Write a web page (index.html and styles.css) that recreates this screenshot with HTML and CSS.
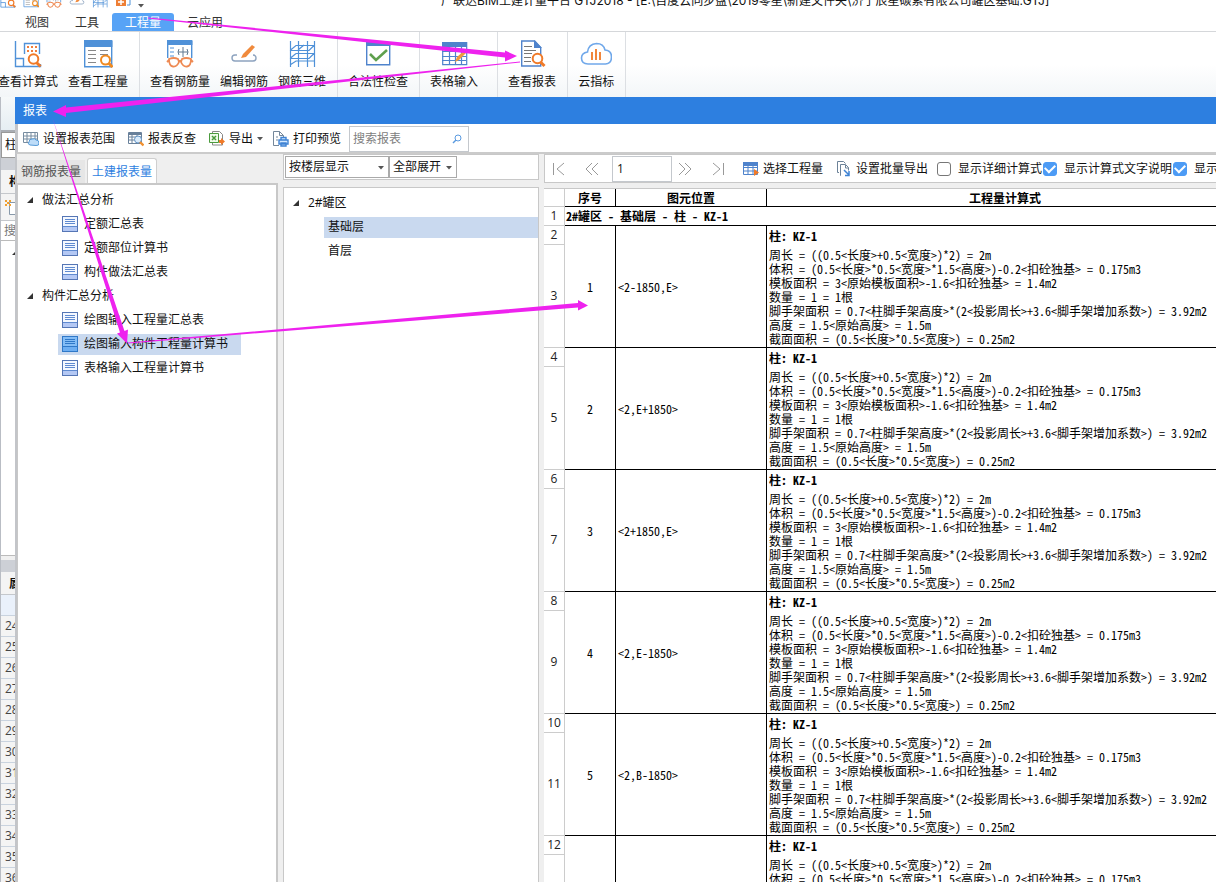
FILE: index.html
```html
<!DOCTYPE html>
<html lang="zh-CN">
<head>
<meta charset="utf-8">
<title>广联达BIM土建计量平台 GTJ2018</title>
<link rel="stylesheet" href="styles.css">
</head>
<body>
<svg class="defs" aria-hidden="true">
  <symbol id="doc" viewBox="0 0 16 16"><rect x=".5" y=".5" width="15" height="15" fill="#f4f8ff" stroke="#5576b5"/><path d="M1 11h14v4H1z" fill="#b4c8f4"/><path d="M3 3.5h10M3 5.5h10M3 7.5h10M1 10.5h14" stroke="#5f8ad0" fill="none"/></symbol>
  <symbol id="doc-on" viewBox="0 0 16 16"><rect x=".5" y=".5" width="15" height="15" fill="#84bdf6" stroke="#2f78c8"/><path d="M1 11h14v4H1z" fill="#6daef2"/><path d="M3 3.5h10M3 5.5h10M3 7.5h10M1 10.5h14" stroke="#2f78c8" fill="none"/></symbol>
  <symbol id="caret" viewBox="0 0 6 4"><path d="M0 0h6L3 3.500z" fill="#555"/></symbol>
  <symbol id="open" viewBox="0 0 8 8"><path d="M7 1v6H1z" fill="#333"/></symbol>
  <symbol id="calc" viewBox="0 0 28 28"><g fill="none" stroke="#4f91d8" stroke-width="1.400"><path d="M1.500 1v25.500h25V24M1.500 18.500h8v8M10.500 14V3.500h15V14"/></g><path d="M13 7h2m2 0h2m2 0h2m-10 4h2m2 0h2m2 0h2" stroke="#ef7d3c" stroke-width="2"/><circle cx="19.500" cy="19" r="4.800" fill="#fff" stroke="#f07a28" stroke-width="2"/><path d="M22.500 22.500l4 4" stroke="#f07a28" stroke-width="3"/></symbol>
  <symbol id="sheet-find" viewBox="0 0 30 28"><path d="M1.700 1.700h27v25h-27z" fill="#fff" stroke="#4f91d8" stroke-width="1.400"/><path d="M1 0h28.400v7H1z" fill="#4f91d8"/><path d="M5 10.500h8m-8 4h8m-8 4h8m-8 4h8m4-12h8m-8 4h8" stroke="#888"/><circle cx="22.500" cy="20" r="4.500" fill="#fff" stroke="#f08a20" stroke-width="2"/><path d="M25.500 23l4 4" stroke="#f08a20" stroke-width="3"/></symbol>
  <symbol id="glasses" viewBox="0 0 28 28"><path d="M1.700 18V1.700h24V18" fill="#fff" stroke="#4f91d8" stroke-width="1.400"/><path d="M1 0h25.400v5H1z" fill="#4f91d8"/><path d="M4 8h4m-4 4h4m-4 4h4" stroke="#4f91d8"/><path d="M17 7v10m-5-5h10M13 9q-2 3 0 6m8-6q2 3 0 6" stroke="#607890" fill="none"/><path d="M3 19q5-2 9 0l1 3q-2 5-6 4.500Q3 26 3 19zm22 0q-5-2-9 0l-1 3q2 5 6 4.500 4-.5 4-7.500zM12 21h4M3 20l-2 2m24-2l2 2" fill="#fff" stroke="#ee8a53" stroke-width="1.800"/></symbol>
  <symbol id="edit" viewBox="0 0 28 28"><path d="M7 15H5q-3 0-3 3t3 3h18q3 0 3-3t-3-3" fill="none" stroke="#8da3bf" stroke-width="1.400"/><path d="M11 18l2-4L22 5l3 2-9 10z" fill="#f08a3c"/></symbol>
  <symbol id="mesh" viewBox="0 0 28 28"><path d="M2.500 1v26m8-26v26m9-26v26m7-26v26M2 10.500l6-5h19M2 18.500h19l5-5M2 25l6-4h18M2 10.500h19l5-5M8 13.500h18M2 18.500l6-5M10 10l6-5" fill="none" stroke="#4f91d8" stroke-width="1.200"/></symbol>
  <symbol id="check" viewBox="0 0 28 28"><path d="M2.700 2.700h23v22h-23z" fill="#fff" stroke="#4f83cc" stroke-width="1.400"/><path d="M2 2h24.400v4H2z" fill="#4f83cc"/><path d="M6 14l6 6L23 10" fill="none" stroke="#5fa04e" stroke-width="2.600"/></symbol>
  <symbol id="grid-edit" viewBox="0 0 28 28"><path d="M2.700 2.700h24v22h-24zM2 11.500h24m-24 5h24m-24 4h24M9.500 7v18m6-18v18m6-18v18" fill="#fff" stroke="#4f83cc" stroke-width="1.200"/><path d="M2 2h25v5H2z" fill="#4f83cc"/><path d="M15 22l2-5 9-8 2 2-9 9z" fill="#f09a3c"/></symbol>
  <symbol id="report" viewBox="0 0 28 28"><path d="M3.700 1h13l6 6.500V26h-19z" fill="#fff" stroke="#4f83cc" stroke-width="1.400"/><path d="M16 0v8h8z" fill="#4f83cc"/><path d="M6 6.500h8m-8 4h12m-12 3h8m-8 4h7m-7 4h7" stroke="#777"/><circle cx="19.500" cy="18.500" r="4.800" fill="#fff" stroke="#f07a28" stroke-width="2"/><path d="M22.500 22l4 4" stroke="#f07a28" stroke-width="3"/></symbol>
  <symbol id="cloud" viewBox="0 0 32 28"><path d="M8 24q-6.500 0-6.500-6 0-5 6-6 1-8 9-8.500 7 0 8.500 6.500 6.500.5 6.500 7t-6 7z" fill="#fff" stroke="#70a8ea" stroke-width="1.600"/><path d="M12 12v8m4-11v11m4-8v8" stroke="#f07a28" stroke-width="1.800"/></symbol>
  <symbol id="range" viewBox="0 0 16 16"><path d="M.5 1.500h14v10H.5zM0 5h14M0 8h14M4 2v9m4-9v9m4-9v9" fill="none" stroke="#778ca0"/><path d="M7 14q-3-1-1-3 0-3 3-3 3-1 4 1 3 0 3 3 0 3-3 2.500z" fill="#bddcf8" stroke="#579bd8"/></symbol>
  <symbol id="recheck" viewBox="0 0 16 16"><path d="M.5 1.500h13v11H.5zM0 6h13M0 9h8M4 2v10m5-10v5" fill="none" stroke="#68809a"/><path d="M1 2h12v2H1z" fill="#68809a"/><circle cx="10" cy="8.500" r="3.500" fill="#d9ebfb" stroke="#6595c5"/><path d="M12 11l3.500 3.500" stroke="#f09030" stroke-width="2.400"/></symbol>
  <symbol id="export" viewBox="0 0 16 16"><path d="M3.500 12V.5h7l3 3V14h-10v-2" fill="#fff" stroke="#888"/><path d="M.5 2.500h9v9h-9z" fill="#effbe9" stroke="#4b9b3d"/><path d="M3 5l4 4m0-4L3 9" stroke="#4b9b3d" stroke-width="1.500"/><path d="M10 9h2V7l4 3.500-4 3.500v-2h-2z" fill="#f07a28"/></symbol>
  <symbol id="print" viewBox="0 0 16 16"><path d="M6 14.500H.5V.5h6l4 4v2M6.500.5v4h4M3 6h2M3 9h2" fill="none" stroke="#74879a"/><path d="M6 9h9v4H6zM8 9V6.500h5V9M8 12h5v3H8z" fill="#d3e8ff" stroke="#3f83d4" stroke-width="1.400"/></symbol>
  <symbol id="grid-pick" viewBox="0 0 16 16"><path d="M.5 1.500h14v12H.5zM0 6.500h14M0 10h14M5 5v8m5-8v8" fill="#fff" stroke="#4f83cc"/><path d="M0 1h15v4H0z" fill="#4f83cc"/><path d="M11 8l5 3.500-5 3.500z" fill="#f07a28"/></symbol>
  <symbol id="batch" viewBox="0 0 16 16"><path d="M3 11.500H1.500V.5h6l2 2M5 14.500h-.5v-11h5l3 3v3M9.500 4v3h3" fill="none" stroke="#6c8298"/><path d="M8 9l5 5m0-4v4.500H9" fill="none" stroke="#3f83d4" stroke-width="1.500"/></symbol>
</svg>

<header class="app-head">
  <div class="quick">
    <div class="quick-icons">
      <svg><use href="#calc"/></svg><svg><use href="#sheet-find"/></svg><svg><use href="#glasses"/></svg><svg><use href="#edit"/></svg><svg><use href="#mesh"/></svg>
      <svg viewBox="0 0 16 16"><path d="M1 2h10v12H1z" fill="#ee7f35"/><path d="M3 10h6m-3-3v6" stroke="#fff" stroke-width="1.500"/><path d="M12 2h3v11h-3" stroke="#4f91d8" fill="none"/></svg>
      <svg class="caret"><use href="#caret"/></svg>
    </div>
    <div class="app-title">广联达BIM土建计量平台 GTJ2018 - [E:\百度云同步盘\2019零星\新建文件夹\济宁辰星碳素有限公司罐区基础.GTJ]</div>
  </div>
  <nav class="tabs">
    <button>视图</button><button>工具</button><button class="on">工程量</button><button>云应用</button>
  </nav>
</header>

<section class="ribbon">
  <div class="group first">
    <button><svg><use href="#calc"/></svg>查看计算式</button>
    <button><svg class="mid"><use href="#sheet-find"/></svg>查看工程量</button>
  </div>
  <div class="group">
    <button><svg><use href="#glasses"/></svg>查看钢筋量</button>
    <button><svg><use href="#edit"/></svg>编辑钢筋</button>
    <button><svg><use href="#mesh"/></svg>钢筋三维</button>
  </div>
  <div class="group"><button><svg><use href="#check"/></svg>合法性检查</button></div>
  <div class="group wide"><button><svg><use href="#grid-edit"/></svg>表格输入</button></div>
  <div class="group"><button><svg><use href="#report"/></svg>查看报表</button></div>
  <div class="group"><button><svg class="cloud"><use href="#cloud"/></svg>云指标</button></div>
</section>

<main class="work">
  <aside class="behind">
    <div class="b-gap"></div>
    <div class="b-type">柱</div>
    <div class="b-bar"></div>
    <div class="b-head">构</div>
    <div class="b-tool"><svg viewBox="0 0 16 16"><path d="M4.500 3.500h11v12h-11z" fill="#fff" stroke="#8899aa"/><path d="M0 1h2v2h2V1h2v2H4v2h2v2H4V5H2v2H0V5h2V3H0z" fill="#f0a030"/></svg></div>
    <div class="b-search">搜</div>
    <div class="b-tree"><svg class="tri"><use href="#open"/></svg></div>
    <div class="b-split"></div>
    <div class="b-head prop">属</div>
    <div class="b-cols"></div>
    <ol class="b-rows"><li>24</li><li>25</li><li>26</li><li>27</li><li>28</li><li>29</li><li>30</li><li>31</li><li>32</li><li>33</li><li>34</li><li>35</li><li>36</li></ol>
  </aside>

  <section class="dialog">
    <h1>报表</h1>
    <div class="toolbar">
      <button><svg><use href="#range"/></svg>设置报表范围</button>
      <button><svg><use href="#recheck"/></svg>报表反查</button>
      <button><svg><use href="#export"/></svg>导出<svg class="caret"><use href="#caret"/></svg></button>
      <button><svg><use href="#print"/></svg>打印预览</button>
      <div class="search">
        <input type="text" placeholder="搜索报表" aria-label="搜索报表">
        <svg viewBox="0 0 10 10"><circle cx="6" cy="4" r="3" fill="none" stroke="#5a9ae0"/><path d="M4 6L1 9" stroke="#5a9ae0" stroke-width="1.500"/></svg>
      </div>
    </div>
    <div class="panes">
      <div class="reports">
        <div class="rtabs"><button>钢筋报表量</button><button class="on">土建报表量</button></div>
        <ul class="tree">
          <li class="top"><svg class="tri"><use href="#open"/></svg>做法汇总分析</li>
          <li><span><svg><use href="#doc"/></svg>定额汇总表</span></li>
          <li><span><svg><use href="#doc"/></svg>定额部位计算书</span></li>
          <li><span><svg><use href="#doc"/></svg>构件做法汇总表</span></li>
          <li class="top"><svg class="tri"><use href="#open"/></svg>构件汇总分析</li>
          <li><span><svg><use href="#doc"/></svg>绘图输入工程量汇总表</span></li>
          <li><span class="sel"><svg><use href="#doc-on"/></svg>绘图输入构件工程量计算书</span></li>
          <li><span><svg><use href="#doc"/></svg>表格输入工程量计算书</span></li>
        </ul>
      </div>

      <div class="floors">
        <div class="filters">
          <div class="pick floor"><select aria-label="显示方式"><option>按楼层显示</option></select><svg class="caret"><use href="#caret"/></svg></div>
          <div class="pick"><select aria-label="展开"><option>全部展开</option></select><svg class="caret"><use href="#caret"/></svg></div>
        </div>
        <ul class="tree">
          <li class="top"><svg class="tri"><use href="#open"/></svg>2#罐区</li>
          <li><span class="sel">基础层</span></li>
          <li><span>首层</span></li>
        </ul>
      </div>

      <div class="view">
        <div class="viewbar">
          <div class="pager">
            <button aria-label="首页"><svg viewBox="0 0 14 14"><path d="M1.500 1v12M12 1L5 7l7 6"/></svg></button>
            <button aria-label="上一页"><svg viewBox="0 0 14 14"><path d="M7 1L1 7l6 6M13 1L7 7l6 6"/></svg></button>
            <input type="text" value="1" aria-label="页码">
            <button aria-label="下一页"><svg viewBox="0 0 14 14"><path d="M1 1l6 6-6 6M7 1l6 6-6 6"/></svg></button>
            <button aria-label="末页"><svg viewBox="0 0 14 14"><path d="M12.500 1v12M2 1l7 6-7 6"/></svg></button>
          </div>
          <button class="cmd"><svg><use href="#grid-pick"/></svg>选择工程量</button>
          <button class="cmd"><svg><use href="#batch"/></svg>设置批量导出</button>
          <div class="checks">
            <label><input type="checkbox">显示详细计算式</label>
            <label><input type="checkbox" checked>显示计算式文字说明</label>
            <label><input type="checkbox" checked>显示</label>
          </div>
        </div>
        <div class="sheet">
          <table>
            <colgroup><col class="c-row"><col class="c-no"><col class="c-pos"><col class="c-exp"></colgroup>
            <thead><tr><th class="n"></th><th>序号</th><th>图元位置</th><th>工程量计算式</th></tr></thead>
            <tbody>
              <tr><th class="n">1</th><td colspan="3" class="title">2#罐区 - 基础层 - 柱 - KZ-1</td></tr>

              <tr><th class="n">2</th><td rowspan="2" class="no">1</td><td rowspan="2">&lt;2-1850,E&gt;</td><td class="name">柱: KZ-1</td></tr>
              <tr><th class="n">3</th><td class="exp">周长 = ((0.5&lt;长度&gt;+0.5&lt;宽度&gt;)*2) = 2m<br>体积 = (0.5&lt;长度&gt;*0.5&lt;宽度&gt;*1.5&lt;高度&gt;)-0.2&lt;扣砼独基&gt; = 0.175m3<br>模板面积 = 3&lt;原始模板面积&gt;-1.6&lt;扣砼独基&gt; = 1.4m2<br>数量 = 1 = 1根<br>脚手架面积 = 0.7&lt;柱脚手架高度&gt;*(2&lt;投影周长&gt;+3.6&lt;脚手架增加系数&gt;) = 3.92m2<br>高度 = 1.5&lt;原始高度&gt; = 1.5m<br>截面面积 = (0.5&lt;长度&gt;*0.5&lt;宽度&gt;) = 0.25m2</td></tr>

              <tr><th class="n">4</th><td rowspan="2" class="no">2</td><td rowspan="2">&lt;2,E+1850&gt;</td><td class="name">柱: KZ-1</td></tr>
              <tr><th class="n">5</th><td class="exp">周长 = ((0.5&lt;长度&gt;+0.5&lt;宽度&gt;)*2) = 2m<br>体积 = (0.5&lt;长度&gt;*0.5&lt;宽度&gt;*1.5&lt;高度&gt;)-0.2&lt;扣砼独基&gt; = 0.175m3<br>模板面积 = 3&lt;原始模板面积&gt;-1.6&lt;扣砼独基&gt; = 1.4m2<br>数量 = 1 = 1根<br>脚手架面积 = 0.7&lt;柱脚手架高度&gt;*(2&lt;投影周长&gt;+3.6&lt;脚手架增加系数&gt;) = 3.92m2<br>高度 = 1.5&lt;原始高度&gt; = 1.5m<br>截面面积 = (0.5&lt;长度&gt;*0.5&lt;宽度&gt;) = 0.25m2</td></tr>

              <tr><th class="n">6</th><td rowspan="2" class="no">3</td><td rowspan="2">&lt;2+1850,E&gt;</td><td class="name">柱: KZ-1</td></tr>
              <tr><th class="n">7</th><td class="exp">周长 = ((0.5&lt;长度&gt;+0.5&lt;宽度&gt;)*2) = 2m<br>体积 = (0.5&lt;长度&gt;*0.5&lt;宽度&gt;*1.5&lt;高度&gt;)-0.2&lt;扣砼独基&gt; = 0.175m3<br>模板面积 = 3&lt;原始模板面积&gt;-1.6&lt;扣砼独基&gt; = 1.4m2<br>数量 = 1 = 1根<br>脚手架面积 = 0.7&lt;柱脚手架高度&gt;*(2&lt;投影周长&gt;+3.6&lt;脚手架增加系数&gt;) = 3.92m2<br>高度 = 1.5&lt;原始高度&gt; = 1.5m<br>截面面积 = (0.5&lt;长度&gt;*0.5&lt;宽度&gt;) = 0.25m2</td></tr>

              <tr><th class="n">8</th><td rowspan="2" class="no">4</td><td rowspan="2">&lt;2,E-1850&gt;</td><td class="name">柱: KZ-1</td></tr>
              <tr><th class="n">9</th><td class="exp">周长 = ((0.5&lt;长度&gt;+0.5&lt;宽度&gt;)*2) = 2m<br>体积 = (0.5&lt;长度&gt;*0.5&lt;宽度&gt;*1.5&lt;高度&gt;)-0.2&lt;扣砼独基&gt; = 0.175m3<br>模板面积 = 3&lt;原始模板面积&gt;-1.6&lt;扣砼独基&gt; = 1.4m2<br>数量 = 1 = 1根<br>脚手架面积 = 0.7&lt;柱脚手架高度&gt;*(2&lt;投影周长&gt;+3.6&lt;脚手架增加系数&gt;) = 3.92m2<br>高度 = 1.5&lt;原始高度&gt; = 1.5m<br>截面面积 = (0.5&lt;长度&gt;*0.5&lt;宽度&gt;) = 0.25m2</td></tr>

              <tr><th class="n">10</th><td rowspan="2" class="no">5</td><td rowspan="2">&lt;2,B-1850&gt;</td><td class="name">柱: KZ-1</td></tr>
              <tr><th class="n">11</th><td class="exp">周长 = ((0.5&lt;长度&gt;+0.5&lt;宽度&gt;)*2) = 2m<br>体积 = (0.5&lt;长度&gt;*0.5&lt;宽度&gt;*1.5&lt;高度&gt;)-0.2&lt;扣砼独基&gt; = 0.175m3<br>模板面积 = 3&lt;原始模板面积&gt;-1.6&lt;扣砼独基&gt; = 1.4m2<br>数量 = 1 = 1根<br>脚手架面积 = 0.7&lt;柱脚手架高度&gt;*(2&lt;投影周长&gt;+3.6&lt;脚手架增加系数&gt;) = 3.92m2<br>高度 = 1.5&lt;原始高度&gt; = 1.5m<br>截面面积 = (0.5&lt;长度&gt;*0.5&lt;宽度&gt;) = 0.25m2</td></tr>

              <tr><th class="n">12</th><td rowspan="2" class="no"></td><td rowspan="2"></td><td class="name">柱: KZ-1</td></tr>
              <tr><th class="n"></th><td class="exp">周长 = ((0.5&lt;长度&gt;+0.5&lt;宽度&gt;)*2) = 2m<br>体积 = (0.5&lt;长度&gt;*0.5&lt;宽度&gt;*1.5&lt;高度&gt;)-0.2&lt;扣砼独基&gt; = 0.175m3</td></tr>
            </tbody>
          </table>
        </div>
      </div>
    </div>
  </section>
</main>

<svg class="arrows" viewBox="0 0 1216 882" aria-hidden="true">
  <path d="M148 17.500L505 52.500V50.500L517 56 505 61.500V57.500L148 18.500z"/>
  <path d="M520 61.500L66 107.500V105L53 111.500 66 117V113L520 62.500z"/>
  <path d="M52 116.500L124.500 331 128 329.500 127 343.500 117 333.500 120 332.500z"/>
  <path d="M128 342.500L578 303V300L588 305.500 578 310.500V307.500L128 343.500z"/>
</svg>
</body>
</html>
```
FILE: styles.css
```css
* { box-sizing: border-box; }
body {
  margin: 0; height: 100vh; overflow: hidden; position: relative;
  display: flex; flex-direction: column; background: #fff; color: #111;
  font: 12px/18px "Open Sans", "Noto Sans CJK SC", sans-serif;
}
button, input, select { font: inherit; color: inherit; margin: 0; padding: 0; border: 0; background: none; border-radius: 0; }
button { white-space: nowrap; }
ul, ol { list-style: none; margin: 0; padding: 0; }
svg { flex: none; display: block; }
.defs { display: none; }
.caret { width: 6px; height: 4px; }
.tri { width: 8px; height: 8px; }

.quick { height: 13px; overflow: hidden; display: flex; align-items: flex-end; }
.quick-icons { display: flex; align-items: flex-end; gap: 7px; width: 441px; padding-bottom: 5px; }
.quick-icons svg { width: 16px; height: 16px; }
.quick-icons .caret { width: 6px; height: 4px; }
.app-title { white-space: nowrap; padding-bottom: 3px; font-family: Inter, "Noto Sans CJK SC", sans-serif; }
.tabs { display: flex; padding-left: 12px; border-bottom: 1px solid #d5d7da; }
.tabs button { height: 18px; padding: 2px 13px 0; line-height: 16px; color: #333; }
.tabs .on { background: #57a3f6; color: #fff; border-radius: 3px 3px 0 0; }

.ribbon { display: flex; height: 65px; flex: none; background: linear-gradient(#fff 50%, #f3f6f8); }
.group { display: flex; gap: 10px; padding: 8px 11px 0 10px; border-right: 1px solid #dcdfe3; }
.first { padding-left: 0; margin-left: -2px; }
.group.wide { padding-right: 19px; }
.group button { display: flex; flex-direction: column; align-items: center; gap: 5px; }
.group svg { width: 28px; height: 28px; }
.group svg.mid { width: 30px; }
.group svg.cloud { width: 32px; }

.work { flex: 1; min-height: 0; display: grid; grid-template-columns: 15px 1fr; }
.behind { overflow: hidden; white-space: nowrap; display: flex; flex-direction: column; background: #f4f4f4; border-left: 1px solid #b9bdc4; }
.behind > * { flex: none; }
.b-gap { height: 35px; background: linear-gradient(#f6f9fa, #e6eef3); border-bottom: 2px solid #a9adb3; }
.b-type { height: 26px; padding-left: 3px; line-height: 24px; background: #fff; border: 1px solid #999; border-right: 0; }
.b-bar { height: 12px; background: #cdd0d6; }
.b-head { height: 24px; padding-left: 8px; line-height: 24px; font-weight: bold; border-bottom: 1px solid #c5c8cc; }
.b-tool { height: 27px; padding: 5px 0 0 4px; border-bottom: 1px solid #c5c8cc; }
.b-tool svg { width: 16px; height: 16px; }
.b-search { height: 20px; line-height: 20px; padding-left: 3px; background: #fff; color: #777; border-bottom: 1px solid #bbb; }
.b-tree { height: 315px; padding: 7px 0 0 10px; background: #fff; border-bottom: 1px solid #bbb; }
.b-split { height: 16px; border-top: 4px solid #f0f0f0; background: #cdd0d6; }
.b-head.prop { height: 23px; }
.b-cols { height: 20px; background: #eaf1fb; }
.b-rows li { height: 21px; line-height: 20px; padding-left: 4px; border-top: 1px solid #c9d3df; color: #444; }

.dialog { min-width: 0; min-height: 0; display: flex; flex-direction: column; background: #efefef; }
.dialog h1 { margin: 0; height: 27px; flex: none; padding-left: 8px; font-size: 12px; line-height: 27px; font-weight: normal; color: #fff; background: #2d7fe0; }
.toolbar { height: 30px; flex: none; display: flex; align-items: center; gap: 13px; padding: 1px 0 0 5px; background: #fff; border-left: 3px solid #c3c5c9; border-bottom: 2px solid #cbcbcb; }
.toolbar button { display: flex; align-items: center; gap: 4px; }
.toolbar button svg { width: 16px; height: 16px; }
.toolbar button svg.caret { width: 6px; height: 4px; margin-right: -3px; }
.search { display: flex; align-items: center; width: 120px; height: 26px; margin-left: -5px; padding: 0 6px 0 3px; border: 1px solid #c4c8cd; }
.search input { flex: 1; min-width: 0; }
.search input::placeholder { color: #808080; opacity: 1; }
.search svg { width: 10px; height: 10px; }

.panes { flex: 1; min-height: 0; display: grid; grid-template-columns: 263px 256px 1fr; column-gap: 5px; }
.tree { flex: 1; background: #fff; border: 2px solid #c8c8c8; border-bottom: 0; }
.tree li { height: 24px; display: flex; align-items: center; }
.tree span { display: flex; align-items: center; height: 21px; }

.reports { display: flex; flex-direction: column; border-left: 2px solid #c3c5c9; }
.rtabs { display: flex; align-items: flex-end; height: 29px; padding: 3px 0 0; }
.rtabs button { height: 23px; width: 68px; color: #555; background: #e6e6e6; }
.rtabs .on { height: 26px; width: 70px; margin: 0 0 -1px 2px; color: #2f7fdf; background: #fff; border: 1px solid #cfcfcf; border-bottom: 0; border-radius: 3px 3px 0 0; }
.reports .tree { padding: 3px 0 0 8px; border-left-width: 1px; }
.reports .top { gap: 8px; }
.reports li:not(.top) { padding-left: 32px; }
.reports span { gap: 6px; padding: 0 13px 0 4px; }
.reports span svg { width: 16px; height: 16px; }
.sel { background: #c9d9ef; }

.floors { display: flex; flex-direction: column; gap: 7px; }
.filters { display: flex; height: 26px; background: #fff; border: 1px solid #c8c8c8; padding: 1px; }
.pick { position: relative; display: flex; width: 68px; border: 1px solid #aaa; background: #fff; }
.pick.floor { width: 104px; }
.pick select { appearance: none; width: 100%; padding-left: 3px; }
.pick .caret { position: absolute; right: 4px; top: 9px; pointer-events: none; }
.floors .tree { padding: 3px 0 0 8px; border-width: 1px 1px 0; }
.floors .top { gap: 8px; }
.floors li:not(.top) { padding-left: 32px; }
.floors span { flex: 1; padding-left: 4px; }

.view { min-width: 0; min-height: 0; display: flex; flex-direction: column; gap: 5px; overflow: hidden; }
.viewbar { display: flex; align-items: center; height: 29px; flex: none; overflow: hidden; white-space: nowrap; background: #fff; border: 1px solid #c8c8c8; border-right: 0; padding-left: 7px; }
.pager { display: flex; align-items: center; gap: 19px; margin-right: 18px; }
.pager button svg { width: 14px; height: 14px; fill: none; stroke: #999; }
.pager input { width: 60px; height: 26px; margin: 0 -13px 0 -6px; padding-left: 4px; border: 1px solid #c4c8cd; }
.cmd { display: flex; align-items: center; gap: 4px; margin-right: 13px; }
.cmd svg { width: 16px; height: 16px; }
.checks { display: flex; gap: 1px; margin-left: -4px; }
.checks label { display: flex; align-items: center; gap: 7px; }
.checks input { appearance: none; width: 14px; height: 14px; border: 1px solid #777; border-radius: 3px; background: #fff; display: grid; place-items: center; }
.checks input:checked { background: #4c9bf5; border-color: #4c9bf5; }
.checks input:checked::after { content: ""; width: 8px; height: 5px; margin-bottom: 3px; border: solid #fff; border-width: 0 0 2px 2px; transform: rotate(-45deg); }

.sheet { flex: 1; min-height: 0; overflow: hidden; background: #fff; border-top: 1px solid #c8c8c8; }
table { table-layout: fixed; width: 700px; min-width: calc(100% + 28px); border-collapse: separate; border-spacing: 0; color: #000; font: 12px/14px "Noto Sans Mono CJK SC", "Noto Sans CJK SC", monospace; }
.c-row { width: 21px; }
.c-no { width: 51px; }
.c-pos { width: 151px; }
tr { height: 19px; }
th, td { padding: 0 2px; border-right: 1px solid #000; border-bottom: 1px solid #000; white-space: nowrap; }
thead tr { height: 18px; }
.n { padding: 0; font: 12px/16px "Open Sans", sans-serif; color: #222; border-color: #ccc; text-align: center; }
.no { text-align: center; }
.title, .name { font-weight: bold; }
.title { padding-left: 1px; }
.name { border-bottom: 0; }
.exp { padding: 3px 2px 1px; }

.arrows { position: absolute; left: 0; top: 0; width: 1216px; height: 882px; fill: #ee22ee; pointer-events: none; }
```
